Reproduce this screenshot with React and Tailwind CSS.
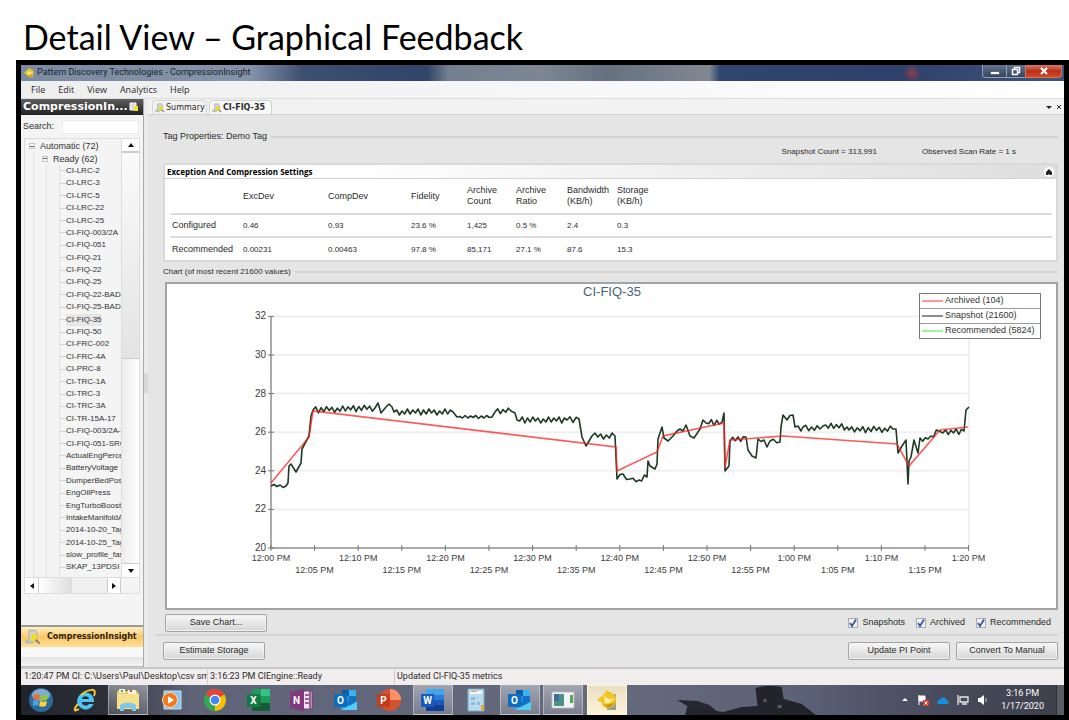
import { Fragment } from 'react';

const TAGS = [
  'CI-LRC-2', 'CI-LRC-3', 'CI-LRC-5', 'CI-LRC-22', 'CI-LRC-25', 'CI-FIQ-003/2A', 'CI-FIQ-051',
  'CI-FIQ-21', 'CI-FIQ-22', 'CI-FIQ-25', 'CI-FIQ-22-BAD', 'CI-FIQ-25-BAD', 'CI-FIQ-35', 'CI-FIQ-50',
  'CI-FRC-002', 'CI-FRC-4A', 'CI-PRC-8', 'CI-TRC-1A', 'CI-TRC-3', 'CI-TRC-3A', 'CI-TR-15A-17',
  'CI-FIQ-003/2A-', 'CI-FIQ-051-SRC', 'ActualEngPerce', 'BatteryVoltage', 'DumperBedPos', 'EngOilPress',
  'EngTurboBoost', 'IntakeManifoldA', '2014-10-20_Tag', '2014-10-25_Tag', 'slow_profile_fas', 'SKAP_13PDSI',
  'SKAP_20LSI55',
];

const COLUMNS = ['ExcDev', 'CompDev', 'Fidelity', 'Archive Count', 'Archive Ratio', 'Bandwidth (KB/h)', 'Storage (KB/h)'];
const ROWS = [
  { name: 'Configured', values: ['0.46', '0.93', '23.6 %', '1,425', '0.5 %', '2.4', '0.3'] },
  { name: 'Recommended', values: ['0.00231', '0.00463', '97.8 %', '85,171', '27.1 %', '87.6', '15.3'] },
];

// Archived trend, straight lines between the stored events
const ARCHIVED = [
  [271, 484], [309, 438], [313, 412], [616, 448], [617, 472], [657, 453], [663, 437], [724, 424],
  [725, 468], [730, 441], [783, 437], [897, 445], [909, 467], [940, 431], [968, 428],
];

// Snapshot trend; long stretches get the process noise added in addNoise
const SNAPSHOT = [
  [271, 487], [286, 487], [288, 484], [289, 467], [291, 465], [296, 473], [301, 464], [302, 450], [309, 437],
  [311, 417], [313, 411], [375, 409], [378, 404], [381, 414], [386, 408], [392, 408], [394, 413], [453, 413],
  [457, 418], [492, 418], [495, 413], [511, 412], [515, 414], [517, 421], [567, 421], [579, 420], [582, 438],
  [586, 447], [592, 437], [615, 437], [617, 480], [623, 475], [630, 480], [639, 481], [647, 478], [648, 462],
  [650, 467], [655, 470], [657, 465], [658, 440], [662, 428], [664, 439], [668, 442], [673, 437], [677, 432],
  [683, 432], [686, 426], [690, 437], [694, 439], [700, 430], [703, 421], [706, 424], [722, 423], [724, 414],
  [725, 472], [729, 467], [730, 442], [746, 438], [748, 451], [752, 457], [756, 459], [758, 440], [764, 441],
  [767, 448], [770, 442], [780, 443], [781, 428], [783, 416], [787, 421], [793, 416], [795, 428], [801, 432],
  [803, 428], [820, 430], [823, 427], [847, 428], [849, 431], [893, 430], [896, 430], [898, 454], [902, 447],
  [906, 441], [908, 485], [909, 462], [911, 458], [914, 441], [918, 454], [920, 439], [928, 440], [939, 432],
  [943, 434], [964, 432], [966, 411], [969, 408],
];

const NOISE = [-2, 2, -3, 1, -2, 3, -1, 2, -3, 2, -2, 1, -3, 3];

const addNoise = (points) => {
  const out = [points[0]];
  for (let i = 1; i < points.length; i++) {
    const [x0, y0] = points[i - 1];
    const [x1, y1] = points[i];
    const flat = Math.abs(y1 - y0) < 9;
    const steps = flat ? Math.floor((x1 - x0) / 2.6) : 1;
    const gain = x0 < 290 || (x0 > 455 && x0 < 490) ? 0.5 : 1;
    for (let s = 1; s < steps; s++) {
      const t = s / steps;
      out.push([x0 + (x1 - x0) * t, y0 + (y1 - y0) * t + NOISE[(i + s) % NOISE.length] * gain]);
    }
    out.push([x1, y1]);
  }
  return out;
};

const toPoints = (points) => points.map(([x, y]) => `${x.toFixed(1)},${y.toFixed(1)}`).join(' ');

const TIME_LABELS = [
  '12:00 PM', '12:05 PM', '12:10 PM', '12:15 PM', '12:20 PM', '12:25 PM', '12:30 PM', '12:35 PM', '12:40 PM',
  '12:45 PM', '12:50 PM', '12:55 PM', '1:00 PM', '1:05 PM', '1:10 PM', '1:15 PM', '1:20 PM',
];

const LEGEND = [
  { label: 'Archived (104)', color: '#ff6b6b' },
  { label: 'Snapshot (21600)', color: '#5a5f5a' },
  { label: 'Recommended (5824)', color: '#6df56d' },
];

const TrendChart = () => (
  <svg viewBox="167 285 889 324" className="block w-full font-['Liberation_Sans',sans-serif] text-[10px]" role="img" aria-label="CI-FIQ-35 trend">
    <text x="612" y="297" textAnchor="middle" fill="#44647c" className="text-[13px]">CI-FIQ-35</text>
    {[32, 30, 28, 26, 24, 22].map((v) => (
      <line key={v} x1="271" x2="969" y1={549 - (v - 20) * 19.3} y2={549 - (v - 20) * 19.3} stroke="#f0f0f0" strokeWidth="2" />
    ))}
    <line x1="969" x2="969" y1="317" y2="549" stroke="#f1f1f1" strokeWidth="2" />
    <path d="M271 317V549H969" fill="none" stroke="#aaa" strokeWidth="2" />
    {[32, 30, 28, 26, 24, 22, 20].map((v) => (
      <Fragment key={v}>
        <line x1="268" x2="274" y1={549 - (v - 20) * 19.3} y2={549 - (v - 20) * 19.3} stroke="#777" />
        <text x="266" y={552 - (v - 20) * 19.3} textAnchor="end" fill="#3c3c3c">{v}</text>
      </Fragment>
    ))}
    {TIME_LABELS.map((label, i) => (
      <Fragment key={label}>
        <line x1={271 + i * 43.6} x2={271 + i * 43.6} y1="546" y2="552" stroke="#777" />
        <text x={271 + i * 43.6} y={i % 2 ? 574 : 562} textAnchor="middle" fill="#3c3c3c" className="text-[9px]">{label}</text>
      </Fragment>
    ))}
    <polyline points={toPoints(addNoise(SNAPSHOT))} fill="none" stroke="#1d3a24" strokeWidth="1.6" strokeLinejoin="round" />
    <polyline points={toPoints(ARCHIVED)} fill="none" stroke="#ff2020" strokeOpacity="0.75" strokeWidth="1.6" />
    <rect x="919.5" y="294.5" width="121" height="45" fill="#fff" stroke="#777" />
    {LEGEND.map((item, i) => (
      <Fragment key={item.label}>
        {i > 0 && <line x1="920" x2="1040" y1={294.5 + i * 15} y2={294.5 + i * 15} stroke="#999" />}
        <line x1="922" x2="943" y1={302 + i * 15} y2={302 + i * 15} stroke={item.color} strokeWidth="1.4" />
        <text x="945" y={304 + i * 15} fill="#333" className="text-[9px]">{item.label}</text>
      </Fragment>
    ))}
  </svg>
);

const TagIcon = ({ className }) => (
  <svg viewBox="0 0 12 12" className={className} aria-hidden="true">
    <path d="M3 1h5l1 2v6H3z" fill="#cdd3d8" stroke="#a3aab0" strokeWidth=".7" />
    <path d="M0 8h6v3H0z" fill="#b9bfc5" />
    <path d="M5 4h3l2 5H4z" fill="#f0e01c" />
    <path d="M8 8l3 3" stroke="#6e7f91" strokeWidth="1.4" />
  </svg>
);

const AppIcon = ({ className }) => (
  <svg viewBox="0 0 24 24" className={className} aria-hidden="true">
    <path d="M12 6h9v16h-9z" fill="#9a9d96" />
    <path d="M2 12c3-3 4-3 6-5l4-5c2 3 9 2 9 9 0 5-3 9-8 9-4 0-6-2-6-5z" fill="#f2c526" />
    <path d="M9 7c2 4 6 5 10 3-2 4-6 6-9 5z" fill="#fff2a0" />
    <path d="M8 15c3 3 8 2 11-1-1 4-4 6-7 5z" fill="#c88a08" />
  </svg>
);

const Letter = ({ children }) => (
  <text x="6.5" y="16" textAnchor="middle" fill="#fff" fontSize="10" fontWeight="bold">{children}</text>
);

const OutlookArt = () => (
  <>
    <path d="M8 2h14v20H8z" fill="#1670c4" />
    <path d="M8 2h7v6H8z" fill="#0f5ca8" />
    <path d="M15 2h7v6h-7z" fill="#35b4f0" />
    <path d="M8 8h7v6H8z" fill="#1f8ade" />
    <path d="M7 13l8 5 8-5v9H7z" fill="#2ba5ea" />
    <path d="M7 22l16-8v8z" fill="#55cdf8" />
    <path d="M0 6h13v13H0z" fill="#0f6cbd" />
    <Letter>O</Letter>
  </>
);

const TASKS = [
  { name: 'Start', art: (
    <>
      <circle cx="12" cy="12" r="12" fill="#2d6a9c" />
      <ellipse cx="12" cy="7" rx="9" ry="6" fill="#82aecb" />
      <path d="M5 7c2-1 4-1 6 0l-1 5c-2-1-4-1-6 0z" fill="#ee6a35" />
      <path d="M12 7c2 1 4 1 7 0l-1 5c-3 1-5 1-7 0z" fill="#8fc93a" />
      <path d="M4 13c2-1 4-1 6 0l-1 5c-2-1-3-1-5 0z" fill="#46a5e8" />
      <path d="M11 13c2 1 4 1 7 0l-1 5c-3 1-5 1-7 0z" fill="#fbd13b" />
    </>
  ) },
  { name: 'Internet Explorer', art: (
    <>
      <path d="M12.500 4.500a8.500 8.500 0 1 0 8 11.500h-4.800c-1.500 2.500-6.700 2-6.900-2H21c.4-5.500-3.500-9.500-8.500-9.500zM8.900 11c.5-3.600 6.800-3.600 7.200 0z" fill="#4cc4f5" fillRule="evenodd" />
      <path d="M5 16C0 22 1 24 6 21M8 7c7-6 17-8 13 1" fill="none" stroke="#f2cb2c" strokeWidth="2" />
    </>
  ) },
  { name: 'Explorer', active: true, art: (
    <>
      <path d="M1 3h20l2 3v15H1z" fill="#e9cb6c" />
      <path d="M3 1h6v4H3zM12 2h8v4h-8z" fill="#f8f3dc" />
      <path d="M5 2h2v2H5z" fill="#3fae5a" />
      <path d="M14 2h2v2h-2z" fill="#d9483b" />
      <path d="M1 6h22v15H1z" fill="#f7e08e" />
      <path d="M4 17c4-3 12-3 16 0v6h-4v-3H8v3H4z" fill="#7cc6ea" />
    </>
  ) },
  { name: 'Media Player', art: (
    <>
      <path d="M4 3h17v18H4z" fill="#8cc5e8" stroke="#bfe0f3" />
      <circle cx="10" cy="12" r="7.5" fill="#f0781e" stroke="#fbd9bb" />
      <path d="M8 8l6 4-6 4z" fill="#fff" />
    </>
  ) },
  { name: 'Chrome', art: (
    <>
      <circle cx="12" cy="12" r="11" fill="#34a853" />
      <path d="M12 12L2.500 6.500A11 11 0 0 1 21.500 6.500z" fill="#ea4335" />
      <path d="M12 12l9.500-5.500A11 11 0 0 1 12 23z" fill="#fbbc05" />
      <circle cx="12" cy="12" r="5.500" fill="#fff" />
      <circle cx="12" cy="12" r="4.300" fill="#4285f4" />
    </>
  ) },
  { name: 'Excel', art: (
    <>
      <path d="M5 1h18v22H5z" fill="#1f9a58" />
      <path d="M14 1h9v7h-9z" fill="#33c481" />
      <path d="M5 8h9v7H5z" fill="#107c41" />
      <path d="M5 15h18v8H5z" fill="#185c37" />
      <path d="M0 6h13v13H0z" fill="#107c41" />
      <Letter>X</Letter>
    </>
  ) },
  { name: 'OneNote', art: (
    <>
      <path d="M9 3h13v18H9z" fill="#f1e3f3" stroke="#80397b" />
      <path d="M15 7h4M15 11h4M15 15h4M20 3v18" stroke="#80397b" strokeWidth="1.500" />
      <path d="M0 4l14-3v22L0 20z" fill="#80397b" />
      <Letter>N</Letter>
    </>
  ) },
  { name: 'Outlook', art: <OutlookArt /> },
  { name: 'PowerPoint', art: (
    <>
      <circle cx="13" cy="12" r="11" fill="#d35230" />
      <path d="M13 1a11 11 0 0 1 11 11H13z" fill="#ff8f6b" />
      <path d="M0 6h13v13H0z" fill="#c43e1c" />
      <Letter>P</Letter>
    </>
  ) },
  { name: 'Word', active: true, art: (
    <>
      <path d="M5 1h18v22H5z" fill="#2b7cd3" />
      <path d="M5 1h18v6H5z" fill="#41a5ee" />
      <path d="M5 12h18v6H5z" fill="#185abd" />
      <path d="M5 17h18v6H5z" fill="#103f91" />
      <path d="M0 6h13v13H0z" fill="#185abd" />
      <Letter>W</Letter>
    </>
  ) },
  { name: 'Journal', art: (
    <>
      <path d="M4 1h16v22H4z" fill="#b9dced" stroke="#7fa9c4" />
      <path d="M6 3h12v3H6z" fill="#f4f8fa" />
      <path d="M7 3h6v1H7z" fill="#e0a23c" />
      <path d="M7 9h4v3H7zM7 14h4v3H7zM13 14h3v3h-3z" fill="#8fbbdc" />
      <path d="M17 17h3v5h-3z" fill="#eca02e" />
    </>
  ) },
  { name: 'Outlook Mail', active: true, art: <OutlookArt /> },
  { name: 'Monitor', active: true, art: (
    <>
      <path d="M1 4h22v16H1z" fill="#f4f4f4" stroke="#b9bcc0" />
      <path d="M3 6h10v12H3z" fill="#4b9187" />
      <path d="M3 6h5v7H3z" fill="#3c6f9c" />
      <path d="M19 7h3v8h-3z" fill="#55a552" />
    </>
  ) },
];

const TaskIcon = ({ children }) => (
  <svg viewBox="0 0 24 24" className="size-6" aria-hidden="true">{children}</svg>
);

const Taskbar = () => (
  <footer className="flex h-[30px] items-stretch justify-between bg-[linear-gradient(90deg,#22242c_0%,#2d2f39_8%,#5f6478_16%,#64697c_60%,#5a6076_75%,#484b5c_88%,#3d3f4b_100%)] font-['Roboto',sans-serif]">
    <div className="flex w-[606px] justify-between">
      {TASKS.map((task) => (
        <button
          key={task.name}
          aria-label={task.name}
          className={`flex w-10 items-center justify-center ${task.active ? 'border border-white/35 bg-linear-to-b from-white/40 to-white/15' : ''}`}
        >
          <TaskIcon>{task.art}</TaskIcon>
        </button>
      ))}
      <button aria-label="CompressionInsight" className="flex w-10 items-center justify-center border border-[#fff5d6] bg-linear-to-b from-[#e9dfc4] to-[#fbf3d8]">
        <AppIcon className="size-6" />
      </button>
    </div>
    <svg viewBox="0 0 273 30" preserveAspectRatio="none" className="min-w-0 flex-1" aria-hidden="true">
      <path d="M50 15l20 1 12 4 12 10H58l2-9z" fill="#262630" />
      <path d="M66 23l30 4 18-5 16-1-2-18c8-3 20-2 26-1l2 12 18 5 14 11H66z" fill="#23232c" />
      <path d="M136 14h3v3h-3zM150 20h4v3h-4z" fill="#575b69" />
    </svg>
    <div className="flex items-center gap-3 text-white">
      <div className="flex items-center gap-2">
        <svg viewBox="0 0 8 12" className="h-3 w-2" aria-hidden="true"><path d="M1 7l3-3 3 3z" fill="#fff" /></svg>
        <svg viewBox="0 0 12 12" className="size-3" aria-hidden="true">
          <path d="M2 1v10M2 2h6v5H2z" fill="#fff" stroke="#fff" />
          <path d="M6 6h6v6H6z" fill="#dd3a2f" />
          <path d="M7.500 7.500l3 3m0-3l-3 3" stroke="#fff" />
        </svg>
        <svg viewBox="0 0 12 12" className="size-3" aria-hidden="true"><path d="M1 10c-2-3 1-5 2-4 1-4 6-3 6 0 3 0 3 3 2 4z" fill="#1690e0" /></svg>
        <svg viewBox="0 0 12 12" className="size-3" fill="none" stroke="#e8e8e8" aria-hidden="true"><path d="M3 3h8v5H3zM5 10h5M1 1v4M1 5v6" strokeWidth="1.300" /></svg>
        <svg viewBox="0 0 12 12" className="size-3" aria-hidden="true"><path d="M1 4h2l4-3v10L3 8H1z" fill="#fff" /><path d="M9 4v4" stroke="#bbb" /></svg>
      </div>
      <div className="text-center text-[9px] leading-[13px]">3:16 PM<br />1/17/2020</div>
      <div className="h-full w-2 border-l border-[#2c2d36] bg-white/15" />
    </div>
  </footer>
);

const TitleBar = () => (
  <header className="flex h-4 items-center justify-between bg-[linear-gradient(90deg,#7b8ba3_0%,#8593aa_22%,#3d5070_27%,#31456a_38%,#33476a_39%,#74808f_41%,#7d8794_50%,#66717f_56%,#7f8893_66%,#31466c_67%,#2d416a_84%,#40557b_100%)] pl-0.5">
    <div className="flex items-center gap-0.5 font-['Roboto',sans-serif] text-[9px] text-[#1a1f2a]">
      <AppIcon className="size-3" />
      Pattern Discovery Technologies - CompressionInsight
    </div>
    <div className="flex h-full items-start pr-0.5">
      <div className="mt-0.5 mr-16 size-3 rounded-full bg-[#9c3c48] opacity-70 blur-[2px]" />
      <button aria-label="Minimize" className="flex h-[13px] w-[25px] items-center justify-center rounded-bl-sm border border-t-0 border-[#8fa0b8] bg-linear-to-b from-[#66758f] to-[#33445f]">
        <span className="mt-1 h-1 w-2.5 border border-[#5a6678] bg-white" />
      </button>
      <button aria-label="Restore" className="flex h-[13px] w-[18px] items-center justify-center border-b border-[#8fa0b8] bg-linear-to-b from-[#66758f] to-[#33445f]">
        <svg viewBox="0 0 10 10" className="size-2.5" fill="#44546e" stroke="#fff" strokeWidth="1.500" aria-hidden="true"><path d="M3.500 1.500h5v5h-5z" /><path d="M1.500 3.500h5v5h-5z" /></svg>
      </button>
      <button aria-label="Close" className="flex h-[13px] w-[37px] items-center justify-center rounded-br-sm border border-t-0 border-[#c9785f] bg-linear-to-b from-[#d6796a] via-[#bb2d14] to-[#d24a28]">
        <svg viewBox="0 0 10 10" className="size-2.5" stroke="#fff" strokeWidth="2" aria-hidden="true"><path d="M2 2l6 6M8 2L2 8" /></svg>
      </button>
    </div>
  </header>
);

const TreeToggle = () => (
  <span className="flex size-1.5 shrink-0 items-center justify-center border border-[#c4c4c4] bg-white">
    <span className="h-px w-1 bg-[#666]" />
  </span>
);

const Arrow = ({ d }) => (
  <svg viewBox="0 0 8 8" className="size-2" aria-hidden="true"><path d={d} fill="#111" /></svg>
);

const Sidebar = () => (
  <aside className="flex w-[123px] shrink-0 flex-col border-r border-[#a9a9a9] bg-[#f4f4f4]">
    <div className="flex h-4 items-center justify-between bg-linear-to-b from-[#606060] to-[#222] pr-1 pl-0.5 font-['DejaVu_Sans',sans-serif] text-[11px] font-bold text-white">
      CompressionIn...
      <svg viewBox="0 0 10 10" className="size-2.5 shrink-0" aria-hidden="true">
        <path d="M1 1h6v7H1z" fill="#ddd" stroke="#fff" />
        <path d="M5 4h4v5H5z" fill="#f0e22a" />
      </svg>
    </div>
    <label className="flex h-[23px] items-center justify-between pr-1 pl-0.5 text-[9px]">
      Search:
      <input className="h-3.5 w-[77px] border border-[#ececec] bg-white" />
    </label>
    <div className="mx-[3px] flex h-[456px] flex-col border border-[#ddd]">
      <div className="flex min-h-0 flex-1">
        <div className="min-w-0 flex-1 overflow-hidden pt-px">
          <ul className="flex h-[446px] flex-col justify-between text-[8px] leading-3 whitespace-nowrap text-[#333]">
            <li className="flex h-[13px] items-center gap-[5px] pl-1 text-[9px]"><TreeToggle />Automatic (72)</li>
            <li className="ml-2 flex h-[13px] items-center gap-[5px] border-l border-[#e2e2e2] pl-2 text-[9px]"><TreeToggle />Ready (62)</li>
            {TAGS.map((tag) => (
              <li key={tag} className="ml-2 flex h-[13px] items-center border-l border-[#e2e2e2] pl-3">
                <span className="h-full w-3.5 shrink-0 border-x border-[#e2e2e2]" />
                <span className="h-px w-1.5 shrink-0 bg-[#d5d5d5]" />
                <span className={tag === 'CI-FIQ-35' ? 'bg-[#e6e6e6]' : ''}>{tag}</span>
              </li>
            ))}
          </ul>
        </div>
        <div className="flex w-[18px] flex-col border-l border-[#ddd] bg-linear-to-r from-[#ececec] to-white">
          <button aria-label="Scroll up" className="flex h-3.5 items-center justify-center border-b-2 border-[#ccc] bg-white"><Arrow d="M1 6l3-4 3 4z" /></button>
          <div className="h-[206px] border-b border-[#ccc] bg-linear-to-b from-[#fafafa] to-[#e4e4e4]" />
          <div className="flex-1" />
          <button aria-label="Scroll down" className="flex h-3.5 items-center justify-center border-t border-[#ccc] bg-white"><Arrow d="M1 2l3 4 3-4z" /></button>
        </div>
      </div>
      <div className="flex h-4 border-t border-[#ddd] pr-[18px]">
        <button aria-label="Scroll left" className="flex w-3.5 items-center justify-center border-r border-[#ccc] bg-white"><Arrow d="M6 1L2 4l4 3z" /></button>
        <div className="w-[33px] bg-linear-to-r from-white to-[#ddd]" />
        <div className="flex-1 bg-[#f0f0f0]" />
        <button aria-label="Scroll right" className="flex w-3.5 items-center justify-center border-x border-[#ccc] bg-white"><Arrow d="M2 1l4 3-4 3z" /></button>
      </div>
    </div>
    <div className="mt-auto border-t-2 border-[#999]">
      <button className="flex h-5 w-full items-center gap-1.5 bg-linear-to-b from-[#fff0c4] via-[#fbc766] to-[#ffdf96] pl-1 font-['DejaVu_Sans',sans-serif] text-[8px] font-bold text-[#2b2413]">
        <TagIcon className="size-4" />
        CompressionInsight
      </button>
      <div className="h-2.5 bg-[#f9f9f9]" />
      <div className="h-2.5 border-b border-[#bbb] bg-linear-to-b from-[#e3e3e3] to-[#f4f4f4]" />
    </div>
  </aside>
);

const GroupLabel = ({ children }) => (
  <div className="flex h-3 items-center gap-1 whitespace-nowrap">
    {children}
    <span className="h-0.5 flex-1 bg-[#d3d3d3]" />
  </div>
);

const Button = ({ children }) => (
  <button className="h-[18px] w-[102px] rounded-xs border border-[#a5a5a5] bg-linear-to-b from-[#f8f8f8] to-[#d6d6d6] text-[9px] shadow-[inset_0_0_0_1px_#f2f2f2]">
    {children}
  </button>
);

const Check = ({ label }) => (
  <label className="flex items-center gap-1 text-[9px]">
    <span className="grid size-2.5 place-items-center">
      <input type="checkbox" defaultChecked className="col-start-1 row-start-1 size-2.5 appearance-none border border-[#aaa] bg-[#f2f2f6]" />
      <svg viewBox="0 0 10 10" className="pointer-events-none col-start-1 row-start-1 size-2.5" fill="none" stroke="#3c58a8" strokeWidth="1.800" aria-hidden="true"><path d="M2 5l2 3 4-6.500" /></svg>
    </span>
    {label}
  </label>
);

const SettingsPanel = () => (
  <section className="rounded-t-sm border-2 border-[#d9d9d9] bg-white">
    <div className="flex h-3.5 items-center justify-between border-b border-[#d3d3d3] bg-linear-to-r from-white from-20% to-[#dedede] px-0.5">
      <h2 className="font-['Open_Sans',sans-serif] text-[8px] font-bold text-black">Exception And Compression Settings</h2>
      <button aria-label="Collapse" className="flex size-2.5 items-center justify-center rounded-full bg-white">
        <svg viewBox="0 0 8 8" className="size-2" aria-hidden="true"><path d="M1 4l3-3 3 3v3H5L4 6 3 7H1z" fill="#222" /></svg>
      </button>
    </div>
    <div className="pr-1 pl-[5px]">
      <table className="w-full table-fixed border-collapse text-left text-[9px] leading-[11px]">
        <colgroup>
          <col className="w-[73px]" />
          <col className="w-[85px]" />
          <col className="w-[83px]" />
          <col className="w-[56px]" />
          <col className="w-[49px]" />
          <col className="w-[51px]" />
          <col className="w-[50px]" />
          <col />
        </colgroup>
        <thead>
          <tr className="h-[35px] border-b-2 border-[#dcdcdc]">
            <td />
            {COLUMNS.map((name) => {
              const [first, second] = name.split(' ');
              return (
                <th key={name} scope="col" className="p-0 align-middle font-normal">
                  {first}
                  {second && <><br />{second}</>}
                </th>
              );
            })}
          </tr>
        </thead>
        <tbody>
          {ROWS.map((row) => (
            <tr key={row.name} className="h-[23px] border-b-2 border-[#dcdcdc] last:border-b-0">
              <th scope="row" className="p-0 pl-0.5 font-normal">{row.name}</th>
              {row.values.map((value, i) => <td key={i} className="p-0 text-[8px]">{value}</td>)}
            </tr>
          ))}
        </tbody>
      </table>
    </div>
  </section>
);

const DetailView = () => (
  <main className="flex min-w-0 flex-1 flex-col bg-[#e5e5e5]">
    <nav className="flex h-4 items-end justify-between border-b border-[#d2d2d2] bg-[#f2f2f2] pr-0.5 pl-1">
      <div className="flex items-end gap-0.5 font-['DejaVu_Sans',sans-serif] text-[8px]">
        <button className="flex h-3.5 w-[55px] items-center gap-px rounded-t-sm border border-b-0 border-[#d6d6d6] pl-0.5"><TagIcon className="size-2.5 shrink-0" />Summary</button>
        <button className="flex h-3.5 w-[63px] items-center gap-px rounded-t-sm border border-b-0 border-[#d0d0d0] bg-[#f8f8f8] pl-0.5 font-bold"><TagIcon className="size-2.5 shrink-0" />CI-FIQ-35</button>
      </div>
      <div className="flex h-full items-center gap-1">
        <svg viewBox="0 0 6 6" className="size-1.5" aria-hidden="true"><path d="M0 2h6L3 5z" fill="#222" /></svg>
        <svg viewBox="0 0 6 6" className="size-1.5" stroke="#333" aria-hidden="true"><path d="M1 1l4 4M5 1L1 5" /></svg>
      </div>
    </nav>
    <div className="flex flex-1 flex-col pt-4 pr-1.5 pl-[15px]">
      <div className="text-[9px]">
        <GroupLabel>Tag Properties: Demo Tag</GroupLabel>
      </div>
      <div className="mt-0.5 flex h-3.5 items-center justify-end gap-[45px] pr-[42px] text-[8px]">
        <span>Snapshot Count = 313,991</span>
        <span>Observed Scan Rate = 1 s</span>
      </div>
      <div className="mt-1">
        <SettingsPanel />
      </div>
      <div className="mt-1 text-[8px]">
        <GroupLabel>Chart (of most recent 21600 values)</GroupLabel>
      </div>
      <div className="mt-1 ml-0.5 border-2 border-[#a3a3a3] bg-white">
        <TrendChart />
      </div>
      <div className="mt-1 ml-0.5 flex items-center justify-between">
        <Button>Save Chart...</Button>
        <div className="flex gap-[11px] pr-[7px]">
          <Check label="Snapshots" />
          <Check label="Archived" />
          <Check label="Recommended" />
        </div>
      </div>
      <div className="mt-0.5 -ml-2 h-0.5 bg-[#d5d5d5]" />
      <div className="mt-1.5 flex justify-between">
        <Button>Estimate Storage</Button>
        <div className="flex gap-1.5">
          <Button>Update PI Point</Button>
          <Button>Convert To Manual</Button>
        </div>
      </div>
    </div>
  </main>
);

export default function App() {
  return (
    <div className="min-h-screen bg-white pl-4 font-['Liberation_Sans',sans-serif] text-[#2b2b2b]">
      <h1 className="h-[60px] pt-3 pl-[7px] font-['Lato',sans-serif] text-[34px] leading-[50px] text-black">Detail View – Graphical Feedback</h1>
      <div className="flex flex-col border-[5px] border-black bg-[#f0f0f0]">
        <TitleBar />
        <nav className="flex h-[18px] items-center gap-[13px] border-b border-[#ddd] bg-linear-to-r from-[#eee] to-white pl-2.5 font-['Open_Sans',sans-serif] text-[9px]">
          {['File', 'Edit', 'View', 'Analytics', 'Help'].map((item) => <button key={item}>{item}</button>)}
        </nav>
        <div className="flex h-[568px]">
          <Sidebar />
          <div className="flex w-1 shrink-0 items-center bg-[#ebebeb]"><span className="h-5 w-full bg-[#d8d8d8]" /></div>
          <DetailView />
        </div>
        <div className="flex h-[18px] items-center border-t-2 border-[#c8c8c8] bg-[#f0edec] font-['Roboto',sans-serif] text-[9px] whitespace-nowrap">
          <span className="w-[187px] overflow-hidden border-r border-[#ccc] pl-[3px]">1:20:47 PM CI: C:\Users\Paul\Desktop\csv sm</span>
          <span className="w-[187px] border-r border-[#ccc] pl-0.5">3:16:23 PM CIEngine::Ready</span>
          <span className="pl-0.5">Updated CI-FIQ-35 metrics</span>
        </div>
        <Taskbar />
      </div>
    </div>
  );
}
